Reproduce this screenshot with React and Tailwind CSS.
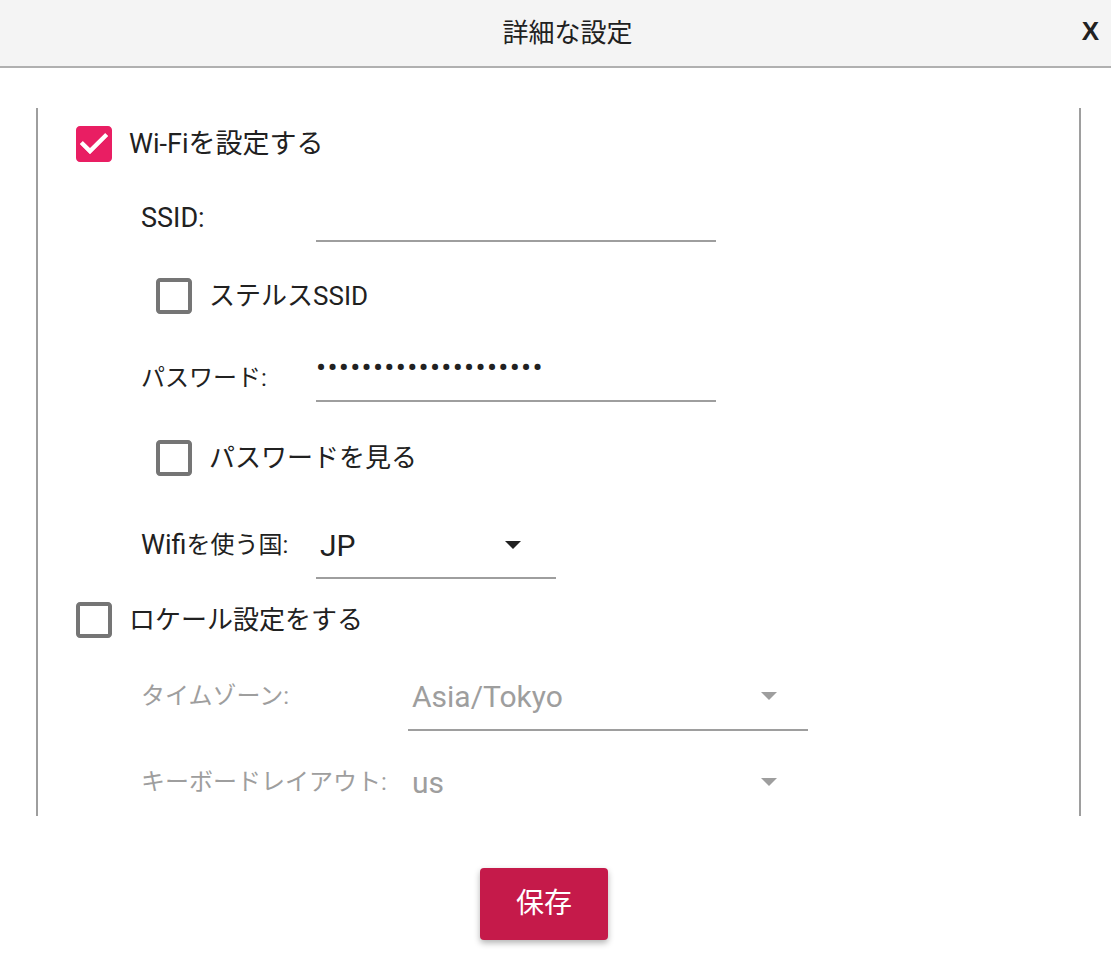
const FONT = "font-['Roboto','Noto_Sans_CJK_JP',sans-serif]";

const CheckBox = ({ checked }) =>
  checked ? (
    <svg viewBox="3 3 18 18" className="w-[36px] h-[36px] shrink-0">
      <path
        fill="#e91e63"
        d="M19 3H5c-1.11 0-2 .9-2 2v14c0 1.1.89 2 2 2h14c1.11 0 2-.9 2-2V5c0-1.1-.89-2-2-2zm-9 14l-5-5 1.41-1.41L10 14.17l7.59-7.59L19 8l-9 9z"
      />
      <path fill="#fff" d="M10 17l-5-5 1.41-1.41L10 14.17l7.59-7.59L19 8l-9 9z" />
    </svg>
  ) : (
    <svg viewBox="3 3 18 18" className="w-[36px] h-[36px] shrink-0">
      <path
        fill="#757575"
        d="M19 5v14H5V5h14m0-2H5c-1.1 0-2 .9-2 2v14c0 1.1.9 2 2 2h14c1.1 0 2-.9 2-2V5c0-1.1-.9-2-2-2z"
      />
    </svg>
  );

const Arrow = ({ color }) => (
  <svg viewBox="0 0 16 8" className="w-[16px] h-[8px]">
    <path d="M0 0h16L8 8z" fill={color} />
  </svg>
);

const App = () => {
  return (
    <div className={`w-[1111px] h-[961px] bg-white text-[#212121] ${FONT}`}>
      {/* Header */}
      <div className="h-[68px] bg-[#f4f4f4] border-b-2 border-[#b0b0b0] flex items-center relative">
        <div className="flex-1 flex justify-center pl-[24px] text-[26px]">詳細な設定</div>
        <div className="absolute right-[12px] top-[12px] font-['Liberation_Sans',sans-serif] font-bold text-[26px]">X</div>
      </div>

      {/* Scroll panel */}
      <div className="mt-[40px] ml-[36px] w-[1045px] h-[708px] border-x-2 border-[#9e9e9e] overflow-hidden">
        {/* Wi-Fi */}
        <div className="mt-[18px] ml-[38px] flex items-center gap-[17px] h-[36px]">
          <CheckBox checked />
          <span className="text-[27px]">Wi-Fiを設定する</span>
        </div>

        {/* SSID */}
        <div className="mt-[32px] ml-[103px] flex items-start">
          <div className="w-[175px] h-[48px] flex items-center text-[27px]">SSID:</div>
          <div className="w-[400px] border-b-2 border-[#9e9e9e]">
            <div className="h-[46px]"></div>
          </div>
        </div>

        {/* Stealth SSID */}
        <div className="mt-[36px] ml-[118px] flex items-center gap-[17px] h-[36px]">
          <CheckBox />
          <span className="text-[26px]">ステルスSSID</span>
        </div>

        {/* Password */}
        <div className="mt-[40px] ml-[103px] flex items-start">
          <div className="w-[175px] h-[48px] flex items-center text-[24px]">パスワード:</div>
          <div className="w-[400px] border-b-2 border-[#9e9e9e]">
            <div className="h-[46px] flex items-start text-[30px] leading-[28px] tracking-[1.27px]">
              ••••••••••••••••••••
            </div>
          </div>
        </div>

        {/* Show password */}
        <div className="mt-[38px] ml-[118px] flex items-center gap-[17px] h-[36px]">
          <CheckBox />
          <span className="text-[26px]">パスワードを見る</span>
        </div>

        {/* Country */}
        <div className="mt-[45px] ml-[103px] flex items-start">
          <div className="w-[175px] h-[48px] flex items-center text-[24px]">
            <span className="text-[27px]">Wifi</span>を使う国:
          </div>
          <div className="w-[240px] border-b-2 border-[#9e9e9e] pb-[8px]">
            <div className="h-[48px] flex items-center justify-between pl-[4px] pr-[35px] text-[30px]">
              <span>JP</span>
              <Arrow color="#212121" />
            </div>
          </div>
        </div>

        {/* Locale */}
        <div className="mt-[23px] ml-[38px] flex items-center gap-[17px] h-[36px]">
          <CheckBox />
          <span className="text-[26px]">ロケール設定をする</span>
        </div>

        {/* Timezone */}
        <div className="mt-[34px] ml-[103px] flex items-start text-[#9e9e9e]">
          <div className="w-[267px] h-[48px] flex items-center text-[24px]">タイムゾーン:</div>
          <div className="w-[400px] border-b-2 border-[#9e9e9e] pb-[9px]">
            <div className="h-[48px] flex items-center justify-between pl-[4px] pr-[31px] text-[30px]">
              <span>Asia/Tokyo</span>
              <Arrow color="#9e9e9e" />
            </div>
          </div>
        </div>

        {/* Keyboard */}
        <div className="mt-[27px] ml-[103px] flex items-start text-[#9e9e9e]">
          <div className="w-[267px] h-[48px] flex items-center text-[24px]">キーボードレイアウト:</div>
          <div className="w-[400px] border-b-2 border-[#9e9e9e] pb-[14px]">
            <div className="h-[48px] flex items-center justify-between pl-[4px] pr-[31px] text-[30px]">
              <span>us</span>
              <Arrow color="#9e9e9e" />
            </div>
          </div>
        </div>
      </div>

      {/* Save */}
      <div className="mt-[52px] flex justify-center pr-[23px]">
        <button
          type="button"
          className="w-[128px] h-[72px] rounded-[4px] bg-[#c51a4a] text-white text-[28px] shadow-[0_3px_6px_rgba(0,0,0,0.3)]"
        >
          保存
        </button>
      </div>
    </div>
  );
};

export default App;
